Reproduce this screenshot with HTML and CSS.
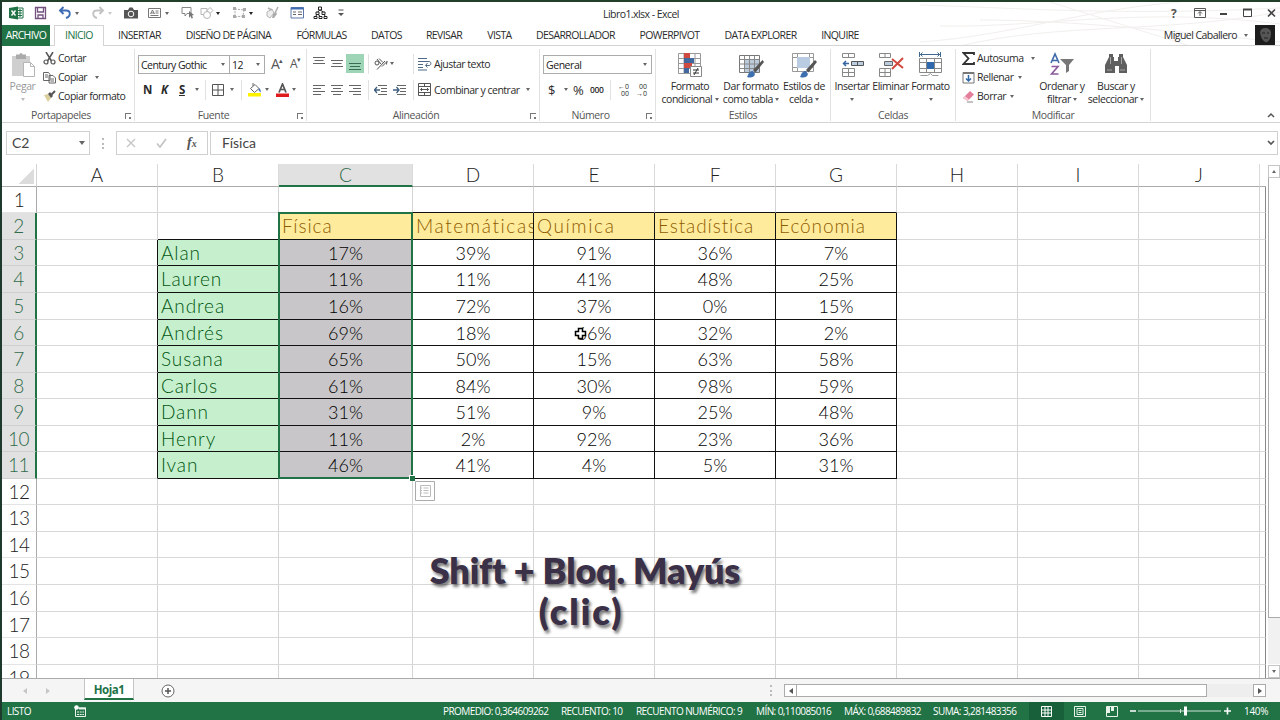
FILE: index.html
```html
<!DOCTYPE html>
<html lang="es">
<head>
    <meta charset="UTF-8">
    <meta name="viewport" content="width=device-width, initial-scale=1.0">
    <title>Libro1.xlsx - Excel</title>
    <link rel="stylesheet" href="styles.css">
</head>
<body>

<div class="window">
    <!-- barra de título -->
    <header class="titlebar">
        <div class="quick">
            <svg width="15" height="14" viewBox="0 0 15 14"><path d="M8 2h6v10H8" fill="#fff" stroke="#217346"/><path d="M9 4.500h4M9 7h4M9 9.500h4M11 3v8" stroke="#217346"/><path d="M0 2l9-1.500v13L0 12z" fill="#217346"/><path d="M2.500 4.500l4 5M6.500 4.500l-4 5" stroke="#fff" stroke-width="1.400"/></svg>
            <svg width="14" height="14" viewBox="0 0 14 14"><path d="M1.500 1.500h10v11h-10zM3.500 1.500v4.500h6V1.500M4 12.500V9h5v3.500" fill="none" stroke="#74507f" stroke-width="1.300"/></svg>
            <svg width="14" height="14" viewBox="0 0 14 14"><path d="M2 4.500h6c5 0 5 6 0 7.500M5.500 1L2 4.500 5.500 8" fill="none" stroke="#3e6db5" stroke-width="1.900"/></svg>
            <i class="arr"></i>
            <svg width="14" height="14" viewBox="0 0 14 14"><path d="M12 4.500H6c-5 0-5 6 0 7.500M8.500 1L12 4.500 8.500 8" fill="none" stroke="#c3c3c3" stroke-width="1.900"/></svg>
            <i class="arr light"></i>
            <svg width="14" height="14" viewBox="0 0 14 14"><path d="M0 4h4l1.500-2.500h3L10 4h4v8.500H0z" fill="#555"/><circle cx="7" cy="8" r="2.800" fill="none" stroke="#fff"/></svg>
            <svg width="14" height="14" viewBox="0 0 14 14"><path d="M1.500 2.500h12v9h-12z" fill="none" stroke="#777"/><path d="M3.500 8l2-4 2 4M4 7h3M8.500 5h3M8.500 7h3M3.500 9.500h8" fill="none" stroke="#777"/></svg>
            <i class="arr"></i>
            <svg width="15" height="14" viewBox="0 0 15 14"><path d="M1 1.500h9v6H6L4 10V7.500H1z" fill="none" stroke="#888"/><path d="M8 5l5 4-2 .5 1 2.500-1.500.5-1-2.500L8 12z" fill="#777"/></svg>
            <svg width="14" height="14" viewBox="0 0 14 14"><path d="M1 2.500h6v4M1 2.500v6h3M10 1.500l3 3-3 3-3-3z" fill="none" stroke="#b5b5b5"/><circle cx="7" cy="9" r="3.500" fill="#fff" stroke="#b5b5b5"/></svg>
            <i class="arr dark"></i>
            <svg width="14" height="14" viewBox="0 0 14 14"><path d="M2 3l9 1-1 6-8 1z" fill="none" stroke="#aaa" stroke-dasharray="2 1"/><path d="M0 1h3v3H0zM10 2h3v3h-3zM0 9h3v3H0zM9 9h3v3H9z" fill="#aaa"/></svg>
            <i class="arr dark"></i>
            <svg width="14" height="14" viewBox="0 0 14 14"><path d="M1 6l5-3 2 4-4 5-3-2z" fill="#eee" stroke="#b5b5b5"/><path d="M2 2l4 2M12 1L9 7" stroke="#b0b0b0" stroke-width="1.600"/><path d="M7 8l3-2 1 2-3 4H6z" fill="#aaa"/></svg>
            <svg width="15" height="14" viewBox="0 0 15 14"><path d="M1 1.500h12.500v10.500H1z" fill="#fff" stroke="#5c78a8"/><path d="M1 2.500h12.500" stroke="#3e6db5" stroke-width="2"/><path d="M3 6h3M3 8.500h3M8 6h4M8 8.500h4" stroke="#666"/></svg>
            <svg width="15" height="14" viewBox="0 0 15 14"><path d="M5.500 1h3v3h-3zM3 6h3v2.500H3zM9 6h3v2.500H9zM1 10.500h3v2H1zM6 10.500h3v2H6zM11 10.500h3v2h-3zM7 4L4.500 6M7 4l3.500 2M4 8.500l-1.500 2M5 8.500l2.500 2M11 8.500l1.500 2" fill="none" stroke="#222"/></svg>
            <svg width="6" height="8" viewBox="0 0 6 8"><path d="M.5 1h5" stroke="#555"/><path d="M0 4h6L3 7z" fill="#555"/></svg>
        </div>
        <div class="doc-title">Libro1.xlsx - Excel</div>
        <div class="window-buttons">
            <b>?</b>
            <svg width="12" height="10" viewBox="0 0 12 10"><path d="M.5.5h11v9H.5zM.5 2.500h11M6 8V4M4 5.500l2-2 2 2" fill="none" stroke="#555"/></svg>
            <svg width="9" height="10" viewBox="0 0 9 10"><path d="M1 6h7" stroke="#444" stroke-width="2"/></svg>
            <svg width="9" height="10" viewBox="0 0 9 10"><path d="M.5 1.500h8v7h-8z" fill="none" stroke="#444"/><path d="M0 1.500h9" stroke="#444" stroke-width="2"/></svg>
            <svg width="9" height="10" viewBox="0 0 9 10"><path d="M1 1.500l7 7M8 1.500l-7 7" stroke="#444" stroke-width="1.600"/></svg>
        </div>
        <svg class="waves" width="360" height="44" viewBox="0 0 360 44"><path d="M0 3C100 6 200 14 360 6M20 24C120 26 220 4 360 22M40 44C140 20 240 32 360 10M0 40C90 34 160 8 260 0M130 0l140 44M60 18c90 0 200 12 300 22" fill="none" stroke="#f2f0ee"/></svg>
    </header>

    <nav class="tabs">
        <span class="file">ARCHIVO</span>
        <span class="current">INICIO</span>
        <span>INSERTAR</span>
        <span>DISEÑO DE PÁGINA</span>
        <span>FÓRMULAS</span>
        <span>DATOS</span>
        <span>REVISAR</span>
        <span>VISTA</span>
        <span>DESARROLLADOR</span>
        <span>POWERPIVOT</span>
        <span>DATA EXPLORER</span>
        <span>INQUIRE</span>
        <div class="user">
            <span>Miguel Caballero</span>
            <i class="arr"></i>
            <svg width="20" height="20" viewBox="0 0 20 20"><path d="M0 0h20v20H0z" fill="#1d1d1d"/><path d="M5 7c1-6 11-5 11 1 0 5-2 8-4 9s-6-2-7-10z" fill="#555"/><path d="M7 8h3M12 8h2M9 13h4" stroke="#222"/></svg>
        </div>
    </nav>

    <!-- cinta -->
    <div class="ribbon">
        <section class="group clipboard">
            <div class="group-body">
                <div class="big off">
                    <svg width="26" height="26" viewBox="0 0 26 26"><path d="M2 4h18v20H2z" fill="#cfcfcf"/><path d="M6 2.500h3.500a1.500 1.500 0 0 1 3 0H16V7H6z" fill="#aaa"/><path d="M13.500 10.500h7l4 4v10h-11z" fill="#fff" stroke="#b5b5b5"/><path d="M20.500 10.500v4h4" fill="none" stroke="#b5b5b5"/></svg>
                    <span>Pegar</span>
                    <i class="arr"></i>
                </div>
                <div class="stack">
                    <div><svg width="13" height="13" viewBox="0 0 13 13"><path d="M3 0l5.500 9M10 0L4.500 9" stroke="#555" stroke-width="1.500"/><circle cx="3" cy="10" r="2" fill="none" stroke="#555" stroke-width="1.200"/><circle cx="10" cy="10" r="2" fill="none" stroke="#555" stroke-width="1.200"/></svg><span>Cortar</span></div>
                    <div><svg width="13" height="13" viewBox="0 0 13 13"><path d="M.5 1.500h5l1.500 2v6H.5zM6 4.500h4l2.500 2.500v5H6z" fill="#fff" stroke="#666"/><path d="M2 4h3M2 6h3M7.500 8h3.500M7.500 10h3.500" stroke="#666"/></svg><span>Copiar</span><i class="arr"></i></div>
                    <div><svg width="13" height="13" viewBox="0 0 13 13"><path d="M1 5l4-1 3 4-3 4z" fill="#dccf9c"/><path d="M5 4l3 4 2-2-3-4z" fill="#555"/><path d="M8 5l4-4" stroke="#555" stroke-width="2"/></svg><span>Copiar formato</span></div>
                </div>
            </div>
            <footer>Portapapeles<i class="launch"></i></footer>
        </section>

        <section class="group font">
            <div class="group-body rows">
                <div class="font-top">
                    <div class="combo">Century Gothic<i class="arr"></i></div>
                    <div class="combo size">12<i class="arr"></i></div>
                    <span class="grow">A<sup>▴</sup></span>
                    <span class="grow small">A<sup>▾</sup></span>
                </div>
                <div class="font-bottom">
                    <b>N</b><b class="it">K</b><b class="un">S</b><i class="arr"></i>
                    <i class="sep"></i>
                    <svg width="12" height="12" viewBox="0 0 12 12"><path d="M.5.5h11v11H.5zM6 .5v11M.5 6h11" fill="none" stroke="#555"/></svg>
                    <i class="arr"></i>
                    <i class="sep"></i>
                    <svg width="14" height="14" viewBox="0 0 14 14"><path d="M2.500 5.500L7 1.500l4 4L6.500 9.500zM5 3V0" fill="#fff" stroke="#666"/><path d="M11 5c2 2 2 3 1.500 4.500L10.500 7z" fill="#3e6db5"/><path d="M0 10h13v3.500H0z" fill="#fff200"/></svg>
                    <i class="arr"></i>
                    <svg width="14" height="14" viewBox="0 0 14 14"><path d="M3 9.500L6.500 1 10 9.500M4.200 6.500h4.600" fill="none" stroke="#555" stroke-width="1.700"/><path d="M0 10.500h13V14H0z" fill="#e01b1b"/></svg>
                    <i class="arr"></i>
                </div>
            </div>
            <footer>Fuente<i class="launch"></i></footer>
        </section>

        <section class="group align">
            <div class="group-body rows">
                <div class="align-row">
                    <svg width="12" height="16" viewBox="0 0 12 16"><path d="M0 1.500h12M1.500 4.500h9M0 7.500h12" stroke="#666"/></svg>
                    <svg width="12" height="16" viewBox="0 0 12 16"><path d="M0 4.500h12M1.500 7.500h9M0 10.500h12" stroke="#666"/></svg>
                    <svg class="on" width="18" height="19" viewBox="0 0 18 19"><path d="M3 9.500h12M4 12.500h10M3 15.500h12" stroke="#3c6b58"/></svg>
                    <i class="sep"></i>
                    <svg width="14" height="14" viewBox="0 0 14 14"><circle cx="3" cy="6" r="2" fill="none" stroke="#555"/><path d="M3 2l4 5M5 1.500l4 4M3 12.500L11 4M8 9.500l5-5M13 4l-.5 3.500" fill="none" stroke="#555"/></svg>
                    <i class="arr"></i>
                    <i class="sep"></i>
                    <svg width="14" height="14" viewBox="0 0 14 14"><path d="M0 1.500h9M0 4.500h11c2.500 0 2.500 4 0 4H8M9.500 6L7.500 8.500l2 2M0 7.500h5M0 10.500h5M0 13h9" fill="none" stroke="#4c6a85"/></svg>
                    <span>Ajustar texto</span>
                </div>
                <div class="align-row">
                    <svg width="12" height="12" viewBox="0 0 12 12"><path d="M0 1.500h12M0 4.500h8M0 7.500h12M0 10.500h8" stroke="#666"/></svg>
                    <svg width="12" height="12" viewBox="0 0 12 12"><path d="M0 1.500h12M2 4.500h8M0 7.500h12M2 10.500h8" stroke="#666"/></svg>
                    <svg width="12" height="12" viewBox="0 0 12 12"><path d="M0 1.500h12M4 4.500h8M0 7.500h12M4 10.500h8" stroke="#666"/></svg>
                    <i class="sep"></i>
                    <svg width="13" height="12" viewBox="0 0 13 12"><path d="M4 1.500h9M7 4.500h6M7 7.500h6M4 10.500h9" stroke="#666"/><path d="M0 6h6M3 3L.5 6 3 9" fill="none" stroke="#3f5f80" stroke-width="1.300"/></svg>
                    <svg width="13" height="12" viewBox="0 0 13 12"><path d="M4 1.500h9M7 4.500h6M7 7.500h6M4 10.500h9" stroke="#666"/><path d="M0 6h6M3.500 3L6 6 3.500 9" fill="none" stroke="#3f5f80" stroke-width="1.300"/></svg>
                    <i class="sep"></i>
                    <svg width="13" height="13" viewBox="0 0 13 13"><path d="M.5.5h12v12H.5zM.5 3.500h12M.5 9.500h12M6.500.5v3M6.500 9.500v3M2.500 6.500h8M4 5L2.500 6.500 4 8M9 5l1.500 1.500L9 8" fill="none" stroke="#555"/></svg>
                    <span>Combinar y centrar</span>
                    <i class="arr"></i>
                </div>
            </div>
            <footer>Alineación<i class="launch"></i></footer>
        </section>

        <section class="group number">
            <div class="group-body rows">
                <div class="number-top"><div class="combo">General<i class="arr"></i></div></div>
                <div class="number-bottom">
                    <span class="sym">$</span><i class="arr"></i><span class="sym">%</span><span class="zeros">000</span>
                    <i class="sep"></i>
                    <div class="dec"><span>←0</span><span>00</span></div>
                    <div class="dec"><span>00</span><span>→0</span></div>
                </div>
            </div>
            <footer>Número<i class="launch"></i></footer>
        </section>

        <section class="group styles">
            <div class="group-body">
                <div class="big">
                    <svg width="26" height="26" viewBox="0 0 26 26"><path d="M1.500 1.500h22v20h-22zM1.500 6.500h22M1.500 11.500h22M1.500 16.500h22M7 1.500v20M18 1.500v20" fill="#fff" stroke="#999"/><path d="M7 1h6v5H7zM7 11h8v5H7z" fill="#cf4b41"/><path d="M7 6h10v5H7zM7 16h5v5H7z" fill="#41679f"/><path d="M13.500 14.500h11v10h-11z" fill="#fff" stroke="#888"/><path d="M16 18h6M16 21h6M21 16l-4 7" stroke="#333"/></svg>
                    <span>Formato<br>condicional <i class="arr"></i></span>
                </div>
                <div class="big">
                    <svg width="26" height="26" viewBox="0 0 26 26"><path d="M1.500 3.500h20v17h-20z" fill="#fff" stroke="#777"/><path d="M7 8h14v12H7z" fill="#bccbdc"/><path d="M1.500 7.500h20M1.500 12h20M1.500 16.500h20M6.500 3.500v17M11.500 3.500v17M16.500 3.500v17" stroke="#888"/><path d="M24.500 8L15 18l2.500 2.500L26 10z" fill="#555"/><path d="M9 25c1-1 1-6 6-6l2 3c-1 4-5 4-8 3z" fill="#3e6fae"/></svg>
                    <span>Dar formato<br>como tabla <i class="arr"></i></span>
                </div>
                <div class="big">
                    <svg width="26" height="26" viewBox="0 0 26 26"><path d="M1.500 1.500h21v18h-21zM1.500 5.500h21M1.500 15.500h21M6.500 1.500v18M18.500 1.500v18" fill="#fff" stroke="#999"/><path d="M6 5h13v11H6z" fill="#b9cce2"/><path d="M24 8L15 18l2.500 2.500L26 10z" fill="#555"/><path d="M9 25c1-1 1-6 6-6l2 3c-1 4-5 4-8 3z" fill="#3e6fae"/></svg>
                    <span>Estilos de<br>celda <i class="arr"></i></span>
                </div>
            </div>
            <footer>Estilos</footer>
        </section>

        <section class="group cells">
            <div class="group-body">
                <div class="big">
                    <svg width="26" height="26" viewBox="0 0 26 26"><path d="M3.500 1.500h12v4h-12zM9.500 1.500v4M3.500 16.500h12v8h-12zM9.500 16.500v8M3.500 20.500h12" fill="#fff" stroke="#888"/><path d="M12.500 9.500h12v4h-12zM18.500 9.500v4" fill="#bccde0" stroke="#555"/><path d="M4 11.500h6M7 9l-2.500 2.500L7 14" fill="none" stroke="#3566a3" stroke-width="1.500"/></svg>
                    <span>Insertar</span><i class="arr"></i>
                </div>
                <div class="big">
                    <svg width="26" height="26" viewBox="0 0 26 26"><path d="M1.500 1.500h11v4h-11zM7 1.500v4M1.500 16.500h11v8h-11zM7 16.500v8M1.500 20.500h11" fill="#fff" stroke="#888"/><path d="M6.500 9.500h8v4h-8z" fill="#bccde0" stroke="#666"/><path d="M14 7l11 9M25 6L14 17" stroke="#d0483f" stroke-width="2"/></svg>
                    <span>Eliminar</span><i class="arr"></i>
                </div>
                <div class="big">
                    <svg width="26" height="26" viewBox="0 0 26 26"><path d="M2 2.500h20M4.500.5l-2 2 2 2M19.500.5l2 2-2 2M1.500 0v5M22.500 0v5" fill="none" stroke="#3e6990"/><path d="M1.500 6.500h22v14h-22zM1.500 10.500h22M1.500 16.500h22M8.500 6.500v14M16.500 6.500v14" fill="#fff" stroke="#888"/><path d="M9 10h7v7H9z" fill="#2f68ad"/><path d="M2.500 23.500h7l3-2 2 2h6" fill="none" stroke="#999"/></svg>
                    <span>Formato</span><i class="arr"></i>
                </div>
            </div>
            <footer>Celdas</footer>
        </section>

        <section class="group edit">
            <div class="group-body">
                <div class="stack">
                    <div><svg width="13" height="13" viewBox="0 0 13 13"><path d="M12 3V1H1.500l5 5.500-5 5.500H12V10" fill="none" stroke="#333" stroke-width="1.800"/></svg><span>Autosuma</span><i class="arr"></i></div>
                    <div><svg width="13" height="13" viewBox="0 0 13 13"><path d="M1 1.500h11v10.500H1z" fill="#fff" stroke="#777"/><path d="M1 2h11" stroke="#777" stroke-width="2"/><path d="M6.500 4v6M4 7.500l2.500 2.500L9 7.500" fill="none" stroke="#2e67a5" stroke-width="1.500"/></svg><span>Rellenar</span><i class="arr"></i></div>
                    <div><svg width="13" height="13" viewBox="0 0 13 13"><path d="M1 8l7-7 4 3.500L5.500 11z" fill="#e47f9b"/><path d="M1 8l2-2 4 3.500L5.500 11z" fill="#f6c9d4"/><path d="M5 12h6" stroke="#888"/></svg><span>Borrar</span><i class="arr"></i></div>
                </div>
                <div class="big">
                    <svg width="26" height="26" viewBox="0 0 26 26"><path d="M2 11L6 2l4 9M3.300 8.500h5.400" fill="none" stroke="#3e69a8" stroke-width="1.600"/><path d="M2.500 14.500H9L2.500 22H9.500" fill="none" stroke="#8a5a9c" stroke-width="1.600"/><path d="M11 7h14l-5 6v6l-3 2v-8z" fill="#777"/></svg>
                    <span>Ordenar y<br>filtrar <i class="arr"></i></span>
                </div>
                <div class="big">
                    <svg width="26" height="26" viewBox="0 0 26 26"><path d="M6 2h4v3h1v4h4V5h1V2h4v3l2 4 2 4v8h-8v-7h-4v7H2v-8l2-4 2-4z" fill="#5f5f5f"/><path d="M7.500 5v7M18.500 5v7M4 18h5M17 18h5" stroke="#a5a5a5"/></svg>
                    <span>Buscar y<br>seleccionar <i class="arr"></i></span>
                </div>
            </div>
            <footer>Modificar</footer>
        </section>
        <svg class="collapse" width="8" height="6" viewBox="0 0 8 6"><path d="M1 5l3-3 3 3" fill="none" stroke="#555" stroke-width="1.500"/></svg>
    </div>

    <!-- barra de fórmulas -->
    <div class="formula-bar">
        <div class="name-box">C2<i class="arr"></i></div>
        <i class="dots"></i>
        <div class="fx-box">
            <svg width="10" height="10" viewBox="0 0 10 10"><path d="M1 1l8 8M9 1L1 9" stroke="#c6c6c6" stroke-width="1.400"/></svg>
            <svg width="11" height="10" viewBox="0 0 11 10"><path d="M1 5.500L4 9l6-8" fill="none" stroke="#c6c6c6" stroke-width="1.800"/></svg>
            <em>f<small>x</small></em>
        </div>
        <div class="formula">Física
            <svg width="8" height="6" viewBox="0 0 8 6"><path d="M1 1l3 3 3-3" fill="none" stroke="#555" stroke-width="1.700"/></svg>
        </div>
    </div>

    <!-- hoja -->
    <div class="sheet-area">
        <div class="sheet" id="sheet"></div>
        <div class="vscroll">
            <div class="vbtn"><i class="arr up"></i></div>
            <div class="vthumb"></div>
            <div class="vtrack"></div>
            <div class="vbtn"><i class="arr"></i></div>
        </div>
        <div class="selection"></div>
        <svg class="quick-analysis" width="20" height="20" viewBox="0 0 20 20"><path d="M.5.5h19v19H.5z" fill="#fff" stroke="#ababab"/><path d="M5.500 4.500h10v11h-10zM8.500 7h5M8.500 9.500h5M8.500 12h5M6 7h1M6 9.500h1M6 12h1" fill="none" stroke="#bbb"/></svg>
        <svg class="cursor" width="13" height="13" viewBox="0 0 13 13"><path d="M4.500 1.500h4v3h3v4h-3v3h-4v-3h-3v-4h3z" fill="#fff" stroke="#000" stroke-width="1.500"/></svg>
        <div class="caption"><p>Shift + Bloq. Mayús</p><p class="second">(clic)</p></div>
    </div>

    <div class="sheet-tabs">
        <i class="nav-left"></i>
        <i class="nav-right"></i>
        <span class="tab">Hoja1</span>
        <svg width="14" height="14" viewBox="0 0 14 14"><circle cx="7" cy="7" r="6" fill="#fff" stroke="#666"/><path d="M7 4v6M4 7h6" stroke="#555" stroke-width="1.500"/></svg>
        <i class="dots"></i>
        <div class="hscroll">
            <div class="hbtn"><i class="tri-left"></i></div>
            <div class="hthumb"></div>
            <div class="htrack"></div>
            <div class="hbtn"><i class="tri-right"></i></div>
        </div>
    </div>

    <footer class="status">
        <span>LISTO</span>
        <svg width="12" height="12" viewBox="0 0 12 12"><path d="M1.500 3h10v8.500h-10z" fill="none" stroke="#e8f3ec"/><path d="M5 2.500h7v2H5z" fill="#e8f3ec"/><circle cx="2.500" cy="2.500" r="2.300" fill="#fff"/><path d="M3 7h7M3 9.500h7" stroke="#e8f3ec" stroke-dasharray="2 .7"/></svg>
        <span>PROMEDIO: 0,364609262</span>
        <span>RECUENTO: 10</span>
        <span>RECUENTO NUMÉRICO: 9</span>
        <span>MÍN: 0,110085016</span>
        <span>MÁX: 0,688489832</span>
        <span>SUMA: 3,281483356</span>
        <div class="view on"><svg width="11" height="11" viewBox="0 0 11 11"><path d="M.5.5h10v10H.5zM.5 4h10M.5 7h10M4 .5v10M7 .5v10" fill="none" stroke="#fff"/></svg></div>
        <div class="view"><svg width="12" height="11" viewBox="0 0 12 11"><path d="M.5.5h11v10H.5zM3 2.500h6v6H3zM4.500 4.500h3M4.500 6.500h3" fill="none" stroke="#e8f3ec"/></svg></div>
        <div class="view"><svg width="12" height="11" viewBox="0 0 12 11"><path d="M.5.5h11v10H.5z" fill="none" stroke="#e8f3ec"/><path d="M1 1h3v6H1zM5 1h3v4H5z" fill="#e8f3ec"/></svg></div>
        <svg width="106" height="14" viewBox="0 0 106 14"><path d="M3 7h6M97 7h7M100.500 3.500v7" stroke="#fff" stroke-width="1.600"/><path d="M11 7h83" stroke="#cfe4d7"/><path d="M53.500 5v4" stroke="#cfe4d7"/><path d="M57 2.500h3v9h-3z" fill="#fff"/></svg>
        <span>140%</span>
    </footer>
</div>

<script>
    const columns = ['A', 'B', 'C', 'D', 'E', 'F', 'G', 'H', 'I', 'J'];
    const subjects = ['Física', 'Matemáticas', 'Química', 'Estadística', 'Ecónomia'];
    const grades = [
        ['Alan', 17, 39, 91, 36, 7],
        ['Lauren', 11, 11, 41, 48, 25],
        ['Andrea', 16, 72, 37, 0, 15],
        ['Andrés', 69, 18, 66, 32, 2],
        ['Susana', 65, 50, 15, 63, 58],
        ['Carlos', 61, 84, 30, 98, 59],
        ['Dann', 31, 51, 9, 25, 48],
        ['Henry', 11, 2, 92, 23, 36],
        ['Ivan', 46, 41, 4, 5, 31]
    ];

    const sheet = document.getElementById('sheet');

    function addCell(className, text = '') {
        const cell = document.createElement('div');
        cell.className = className;
        cell.textContent = text;
        sheet.appendChild(cell);
    }

    // cabecera de columnas
    addCell('corner');
    columns.forEach(c => addCell(c === 'C' ? 'col-head picked' : 'col-head', c));
    addCell('edge-head');

    for (let row = 1; row <= 19; row++) {
        const picked = row >= 2 && row <= 11;
        addCell(picked ? 'row-head picked' : 'row-head', row);

        columns.forEach((c, i) => {
            const student = grades[row - 3];
            if (row === 2 && i >= 2 && i <= 6) {
                addCell(i === 3 || i === 4 ? 'cell subject wide' : 'cell subject', subjects[i - 2]);
            } else if (student && i === 1) {
                addCell('cell name', student[0]);
            } else if (student && i >= 2 && i <= 6) {
                addCell(i === 2 ? 'cell grade shaded' : 'cell grade', student[i - 1] + '%');
            } else {
                // las celdas vecinas comparten el borde negro de la tabla
                let extra = '';
                if (row === 1 && i >= 2 && i <= 6) extra = ' line-bottom';
                if (row === 2 && i === 1) extra = ' line-bottom line-right';
                if (i === 0 && student) extra = ' line-right';
                addCell('cell' + extra);
            }
        });
        addCell('edge');
    }
</script>

</body>
</html>
```

FILE: styles.css
```css
* {
    box-sizing: border-box;
}
body {
    margin: 0;
    width: 1280px;
    height: 720px;
    overflow: hidden;
    background: #fff;
    font-family: "Segoe UI", "Open Sans", "Noto Sans", sans-serif;
    font-size: 10.5px;
    letter-spacing: -0.45px;
    color: #2b2b2b;
}
svg {
    display: block;
    flex: none;
}
.window {
    display: flex;
    flex-direction: column;
    height: 720px;
    border-top: 2px solid #223f29;
    border-left: 2px solid #1d3a2c;
}
.arr {
    display: inline-block;
    width: 0;
    height: 0;
    border: 2.5px solid transparent;
    border-top: 3px solid #666;
    border-bottom: 0;
    vertical-align: 2px;
}
.arr.light {
    border-top-color: #ccc;
}
.arr.dark {
    border-top-color: #222;
}
.arr.up {
    border-top: 0;
    border-bottom: 3px solid #666;
}
.sep {
    width: 1px;
    height: 20px;
    background: #e1e1e1;
}
.dots {
    width: 1px;
    height: 11px;
    border-left: 2px dotted #bbb;
}

/* título */
.titlebar {
    position: relative;
    display: flex;
    align-items: center;
    height: 23px;
}
.quick {
    display: grid;
    grid-template-columns: 25px 24px 17px 16px 17px 16px 23px 18px 16px 19px 16px 17px 16px 17px 24px 23px 25px 10px;
    align-items: center;
    padding-left: 7px;
    width: 594px;
}
.doc-title {
    padding: 1px 0 0 7px;
    width: 575px;
    letter-spacing: -0.55px;
}
.window-buttons {
    display: grid;
    grid-template-columns: 23px 25px 24px 24px 10px;
    align-items: center;
    color: #555;
    font-size: 12px;
    z-index: 1;
}
.waves {
    position: absolute;
    top: 0;
    right: 0;
}

/* pestañas */
.tabs {
    display: grid;
    grid-template-columns: 48px 55px 69px 109px 77px 53px 62px 49px 103px 85px 97px 62px 1fr;
    height: 21px;
    line-height: 21px;
    border-bottom: 1px solid #d4d4d4;
    position: relative;
    letter-spacing: -0.62px;
}
.tabs > span {
    text-align: center;
    white-space: nowrap;
}
.tabs .file {
    background: #217346;
    color: #fff;
}
.tabs .current {
    margin: 0 1px 0 4px;
    height: 21px;
    background: #fff;
    color: #217346;
    border: 1px solid #d4d4d4;
    border-bottom: 0;
    line-height: 19px;
}
.user {
    display: flex;
    justify-content: flex-end;
    align-items: center;
    gap: 7px;
    padding-right: 5px;
    letter-spacing: -0.55px;
}

/* cinta */
.ribbon {
    display: flex;
    height: 77px;
    border-bottom: 1px solid #d4d4d4;
    padding-top: 3px;
}
.group {
    display: flex;
    flex-direction: column;
    border-right: 1px solid #e1e1e1;
    height: 72px;
}
.group-body {
    display: flex;
    height: 60px;
    padding-top: 2px;
}
.group footer {
    display: flex;
    justify-content: center;
    align-items: center;
    height: 12px;
    margin-top: auto;
    color: #555;
    letter-spacing: -0.4px;
    position: relative;
}
.launch {
    position: absolute;
    right: 3px;
    top: 4px;
    width: 6px;
    height: 6px;
    border-top: 1px solid #777;
    border-left: 1px solid #777;
    background: linear-gradient(#777, #777) 3px 3px / 2px 2px no-repeat;
}
.clipboard { width: 133px; }
.font { width: 172px; }
.align { width: 233px; }
.number { width: 116px; }
.styles { width: 175px; }
.cells { width: 125px; }
.edit { width: 195px; }
.clipboard footer,
.font footer,
.align footer,
.number footer {
    padding-right: 14px;
}

.big {
    display: flex;
    flex-direction: column;
    align-items: center;
    text-align: center;
    line-height: 13px;
    white-space: nowrap;
}
.big > svg {
    margin-top: 1px;
}
.big > span {
    margin-top: 2px;
}
.big > .arr {
    margin-top: 5px;
}
.big.off {
    color: #999;
    width: 41px;
}
.big.off .arr {
    border-top-color: #bbb;
}
.stack {
    margin-top: -2px;
}
.stack > div {
    display: flex;
    align-items: center;
    height: 19px;
    white-space: nowrap;
}
.stack svg {
    margin-right: 2px;
}
.stack .arr {
    margin-left: 4px;
}
.clipboard .stack {
    letter-spacing: -0.52px;
}
.clipboard .stack div:nth-child(2) .arr {
    margin-left: 8px;
}
.edit .stack {
    width: 83px;
    padding-left: 6px;
}
.edit .stack div:first-child .arr {
    margin-left: 7px;
}
.edit .big:nth-child(2) { width: 46px; }
.edit .big:nth-child(3) { width: 62px; }
.styles .big:nth-child(1) { width: 68px; }
.styles .big:nth-child(2) { width: 54px; }
.styles .big:nth-child(3) { width: 52px; }
.cells .big:nth-child(1) { width: 42px; }
.cells .big:nth-child(2) { width: 35px; }
.cells .big:nth-child(3) { width: 45px; }

.rows {
    flex-direction: column;
}
.combo {
    display: flex;
    justify-content: space-between;
    align-items: center;
    height: 19px;
    padding: 1px 4px 0 2px;
    border: 1px solid #ababab;
    color: #222;
    white-space: nowrap;
}
.combo.size {
    border-left: 0;
}
.font-top,
.number-top,
.align-row {
    display: grid;
    align-items: center;
    height: 26px;
}
.font-top,
.number-top {
    padding-top: 1px;
}
.font-top {
    grid-template-columns: 92px 35px 6px 19px 14px;
    padding-left: 3px;
}
.font-top .combo {
    letter-spacing: -0.55px;
}
.grow {
    grid-column: 4;
    font-size: 14px;
    line-height: 16px;
    color: #555;
}
.grow.small {
    grid-column: 5;
    font-size: 12px;
}
.grow sup {
    font-size: 7px;
    line-height: 0;
    vertical-align: 6px;
}
.font-bottom {
    display: grid;
    grid-template-columns: 18px 18px 16px 10px 7px 18px 11px 7px 17px 11px 16px 8px;
    align-items: center;
    height: 26px;
    padding-left: 8px;
    font-size: 11.5px;
}
.it { font-style: italic; }
.un { text-decoration: underline; }
.align-row {
    grid-template-columns: 18px 18px 19px 6px 16px 23px 5px 16px 96px 6px;
    padding-left: 6px;
    white-space: nowrap;
}
.align-row:nth-child(2) {
    grid-template-columns: 18px 18px 19px 6px 19px 20px 5px 16px 92px 6px;
}
.on {
    background: #9fd5b7;
    margin-left: -3px;
}
.align-row span {
    padding-top: 1px;
    letter-spacing: -0.5px;
}
.number-top {
    padding-left: 3px;
    padding-right: 3px;
}
.number-bottom {
    display: grid;
    grid-template-columns: 16px 9px 16px 21px 6px 18px 18px;
    align-items: center;
    height: 26px;
    padding-left: 8px;
}
.sym {
    font-size: 13px;
    line-height: 14px;
}
.zeros {
    font-size: 8.5px;
    font-weight: 600;
    letter-spacing: -0.3px;
    padding-left: 1px;
}
.dec {
    display: flex;
    flex-direction: column;
    align-items: flex-end;
    width: 13px;
    font-size: 7px;
    line-height: 7px;
    letter-spacing: 0;
}
.collapse {
    margin: 63px 0 0 116px;
}

/* fórmulas */
.formula-bar {
    display: flex;
    align-items: center;
    height: 41px;
    padding: 0 2px 0 4px;
    font-family: "Century Gothic", Lato, sans-serif;
    font-size: 14px;
    letter-spacing: 0;
    color: #444;
}
.name-box,
.fx-box,
.formula {
    display: flex;
    align-items: center;
    height: 24px;
    border: 1px solid #d0d0d0;
}
.name-box {
    width: 84px;
    justify-content: space-between;
    padding: 0 4px 1px 5px;
}
.name-box .arr {
    border-width: 4px 3px 0;
}
.formula-bar .dots {
    margin: 0 12px 0 12px;
}
.fx-box {
    width: 92px;
    padding-left: 9px;
    gap: 20px;
}
.fx-box em {
    font-family: "Liberation Serif", serif;
    font-weight: bold;
    font-size: 14px;
    color: #555;
}
.fx-box small {
    font-size: 10px;
}
.formula {
    flex: 1;
    justify-content: space-between;
    margin-left: 2px;
    padding: 0 2px 1px 11px;
}

/* hoja */
.sheet-area {
    position: relative;
    display: flex;
    height: 515px;
    overflow: hidden;
}
.sheet {
    display: grid;
    grid-template-columns: 35px 121px 121px 134px 121px 121px 121px 121px 121px 121px 121px 6px;
    grid-template-rows: 23px;
    grid-auto-rows: 26.56px;
    width: 1264px;
    height: 520px;
    font-family: "Century Gothic", Lato, sans-serif;
    font-size: 18px;
    font-weight: 300;
    letter-spacing: 0;
    color: #000;
}
.corner {
    border-bottom: 1px solid #ababab;
    border-right: 1px solid #d4d4d4;
    background: linear-gradient(135deg, transparent 50%, #dcdcdc 50%) 17px 5px / 15px 15px no-repeat;
}
.col-head {
    text-align: center;
    line-height: 22px;
    border-right: 1px solid #dadada;
    border-bottom: 1px solid #ababab;
    font-size: 19px;
    color: #222;
}
.col-head.picked {
    background: #e1e1e1;
    border-bottom: 2px solid #217346;
    color: #2f6b4a;
}
.row-head {
    text-align: center;
    line-height: 26px;
    font-size: 19px;
    border-right: 1px solid #ababab;
    border-bottom: 1px solid #e4e4e4;
    letter-spacing: -0.4px;
    color: #222;
}
.row-head.picked {
    background: #e1e1e1;
    border-right: 2px solid #217346;
    border-bottom-color: #cfcfcf;
    color: #2f6b4a;
}
.cell {
    line-height: 26px;
    border-right: 1px solid #d4d4d4;
    border-bottom: 1px solid #d8d8d8;
    white-space: nowrap;
    overflow: hidden;
}
.subject,
.name,
.grade {
    border-color: #111;
}
.subject,
.name {
    padding-left: 3px;
    font-size: 19px;
    letter-spacing: 0.9px;
}
.subject {
    background: #ffeb9c;
    color: #8f5c00;
}
.subject.wide {
    letter-spacing: 1.6px;
}
.name {
    background: #c6efce;
    color: #00560f;
}
.grade {
    text-align: center;
}
.shaded {
    background: #c8c6c8;
}
.line-bottom {
    border-bottom-color: #111;
}
.line-right {
    border-right-color: #111;
}
.edge {
    border-right: 1px solid #888;
    border-bottom: 1px solid #d8d8d8;
}
.edge-head {
    border-bottom: 1px solid #ababab;
}
.selection {
    position: absolute;
    left: 276px;
    top: 48px;
    width: 135px;
    height: 267px;
    border: 2px solid #217346;
}
.selection::after {
    content: "";
    position: absolute;
    right: -4px;
    bottom: -4px;
    width: 5px;
    height: 5px;
    background: #217346;
    border: 1px solid #fff;
    border-width: 1px 0 0 1px;
}
.vscroll {
    display: flex;
    flex-direction: column;
    width: 14px;
    padding-left: 2px;
}
.vbtn {
    display: flex;
    justify-content: center;
    align-items: center;
    height: 13px;
    margin-top: 1px;
    border: 1px solid #c6c6c6;
}
.vthumb {
    height: 440px;
    border-left: 1px solid #ababab;
    border-bottom: 1px solid #ababab;
}
.vtrack {
    flex: 1;
    background: #f1f1f1;
}
.quick-analysis {
    position: absolute;
    left: 413px;
    top: 317px;
}
.cursor {
    position: absolute;
    left: 572px;
    top: 163px;
    z-index: 2;
}
.caption {
    position: absolute;
    left: 383px;
    top: 386px;
    width: 400px;
    text-align: center;
    font-family: "Century Gothic", Lato, sans-serif;
    font-size: 36px;
    font-weight: 800;
    letter-spacing: -0.2px;
    line-height: 41px;
    color: #3a3048;
    text-shadow: 2px 3px 3px rgba(0, 0, 0, 0.5);
    z-index: 2;
}
.caption p {
    margin: 0;
}
.caption .second {
    padding-right: 8px;
    letter-spacing: 2px;
}

/* pestañas de hoja */
.sheet-tabs {
    display: flex;
    align-items: center;
    height: 24px;
    background: #f5f5f5;
    border-top: 1px solid #ababab;
}
.nav-left,
.nav-right,
.tri-left,
.tri-right {
    border: 3px solid transparent;
}
.nav-left {
    border-right: 4px solid #c6c6c6;
    margin-left: 18px;
}
.nav-right {
    border-left: 4px solid #c6c6c6;
    margin-left: 19px;
}
.tab {
    width: 50px;
    height: 21px;
    margin: -3px 0 0 31px;
    background: #fff;
    border: 1px solid #c6c6c6;
    border-top: 0;
    border-bottom: 2px solid #217346;
    color: #217346;
    font-weight: bold;
    font-size: 11.5px;
    line-height: 21px;
    text-align: center;
}
.sheet-tabs svg {
    margin-left: 27px;
}
.sheet-tabs .dots {
    margin-left: 595px;
}
.hscroll {
    display: flex;
    width: 482px;
    height: 13px;
    margin-left: 12px;
    background: #eee;
}
.hbtn {
    display: flex;
    justify-content: center;
    align-items: center;
    width: 13px;
    border: 1px solid #ababab;
    background: #fff;
}
.hthumb {
    width: 410px;
    background: #fff;
    border: 1px solid #ababab;
    border-left: 0;
}
.htrack {
    flex: 1;
}
.tri-left {
    border-right: 4px solid #555;
    border-left: 0;
}
.tri-right {
    border-left: 4px solid #555;
    border-right: 0;
}

/* estado */
.status {
    display: grid;
    grid-template-columns: 67px 369px 118px 75px 120px 88px 89px 99px 32px 32px 31px 115px 30px;
    align-items: center;
    height: 18px;
    padding-left: 5px;
    background: #217346;
    color: #fff;
    font-size: 10px;
    letter-spacing: -0.57px;
    white-space: nowrap;
}
.status span:last-child {
    letter-spacing: -0.3px;
    padding-left: 2px;
}
.view {
    display: flex;
    justify-content: center;
    align-items: center;
    height: 18px;
}
.view.on {
    background: #17603a;
}
```
